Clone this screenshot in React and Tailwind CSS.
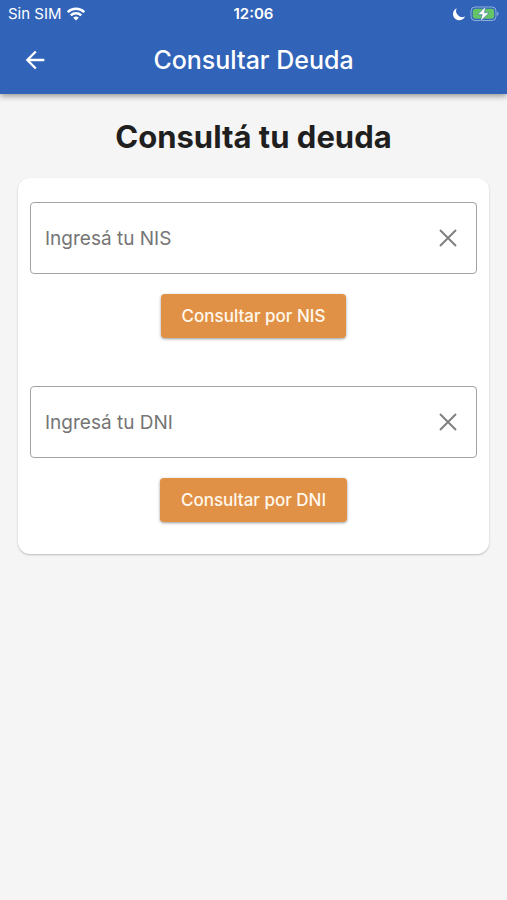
import { useState } from "react";

export default function App() {
  return (
    <div className="min-h-screen bg-[#f5f5f5] font-['Inter','Liberation_Sans',sans-serif]">
      <header className="bg-[#3163b9] text-white shadow-[0_2px_6px_rgba(0,0,0,0.4)]">
        <StatusBar />
        <div className="grid h-[66px] grid-cols-[70px_1fr_70px] items-center pb-[2px]">
          <button type="button" aria-label="Volver" className="justify-self-center">
            <svg viewBox="0 0 24 24" className="size-7" fill="currentColor">
              <path d="M20 11H7.83l5.59-5.59L12 4l-8 8 8 8 1.41-1.41L7.83 13H20v-2z" />
            </svg>
          </button>
          <h1 className="text-center text-[25px] leading-8 font-medium">Consultar Deuda</h1>
        </div>
      </header>

      <main className="px-[18px] pt-6">
        <h2 className="text-center text-[31px] leading-[38px] font-bold text-[#1f1f1f]">
          Consultá tu deuda
        </h2>
        <section className="mt-[22px] flex flex-col gap-12 rounded-xl bg-white px-3 pt-6 pb-8 shadow-[0_1px_2px_rgba(0,0,0,0.24)]">
          <QueryForm id="nis" label="NIS" />
          <QueryForm id="dni" label="DNI" />
        </section>
      </main>
    </div>
  );
}

function QueryForm({ id, label }) {
  const [value, setValue] = useState("");

  return (
    <form
      onSubmit={(event) => event.preventDefault()}
      className="flex flex-col items-center gap-5"
    >
      <div className="flex h-[72px] w-full items-center rounded border border-[#a3a3a3] pr-4 pl-[14px]">
        <input
          id={id}
          type="text"
          inputMode="numeric"
          aria-label={`Ingresá tu ${label}`}
          value={value}
          onChange={(event) => setValue(event.target.value)}
          placeholder={`Ingresá tu ${label}`}
          className="h-full min-w-0 flex-1 text-[19px] leading-8 text-[#1f1f1f] outline-none placeholder:text-[#757575]"
        />
        <button
          type="button"
          aria-label="Borrar"
          onClick={() => setValue("")}
          className="text-[#808080]"
        >
          <svg viewBox="0 0 24 24" className="size-6" stroke="currentColor" strokeWidth="2">
            <path d="M4 4l16 16M20 4L4 20" />
          </svg>
        </button>
      </div>
      <button
        type="submit"
        className="h-11 rounded bg-[#e19146] px-[21px] pt-[2px] text-[17px] font-medium text-[#fff8ec] shadow-[0_1px_3px_rgba(0,0,0,0.4)]"
      >
        {`Consultar por ${label}`}
      </button>
    </form>
  );
}

function StatusBar() {
  return (
    <div className="grid h-7 grid-cols-3 items-center px-2 text-[15px] leading-5">
      <div className="flex items-center gap-1">
        <span>Sin SIM</span>
        <svg viewBox="0 0 20 14" className="h-[14px] w-5" fill="none" stroke="currentColor" strokeWidth="2.5">
          <path d="M1.7 5.1a12 12 0 0 1 16.6 0" />
          <path d="M4.8 8.3a7.6 7.6 0 0 1 10.4 0" />
          <path d="M10 13.6L7.2 10.8a4 4 0 0 1 5.6 0z" fill="currentColor" stroke="none" />
        </svg>
      </div>
      <time className="text-center font-semibold">12:06</time>
      <div className="flex items-center justify-end gap-1">
        <svg viewBox="0 0 14 14" className="size-[14px]" fill="currentColor">
          <path d="M4.8 1.2a6.3 6.3 0 1 0 8.4 8.1A6.1 6.1 0 0 1 4.8 1.2z" />
        </svg>
        <svg viewBox="0 0 29 16" className="h-4 w-[29px]">
          <rect x="1" y="1" width="25" height="13.5" rx="4" fill="none" stroke="#8fb0df" />
          <rect x="2.8" y="2.8" width="21.4" height="9.9" rx="2.4" fill="#65c466" />
          <path d="M27.2 5.5a2.6 2.6 0 0 1 0 4.6z" fill="#8fb0df" />
          <path
            d="M15.6 0.6L7.8 8.6h4.4L10.4 15.2l8.6-8.4h-4.6z"
            fill="#fff"
            stroke="#3163b9"
            strokeWidth="0.5"
          />
        </svg>
      </div>
    </div>
  );
}
